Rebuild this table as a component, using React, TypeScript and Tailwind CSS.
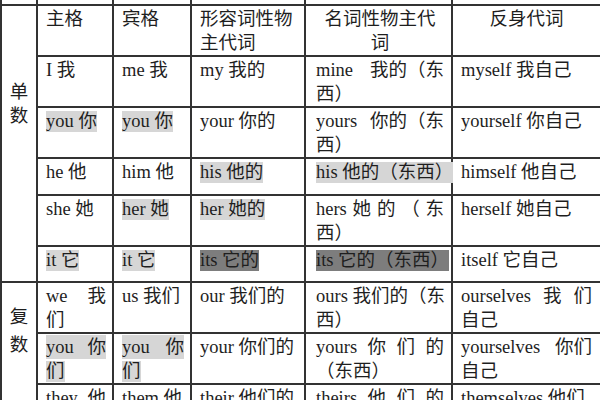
type Cell = { lines: string[]; hl?: "l" | "d"; center?: boolean };

const rows: { h: string; cells: Cell[] }[] = [
  {
    h: "h-[50px]",
    cells: [
      { lines: ["主格"] },
      { lines: ["宾格"] },
      { lines: ["形容词性物", "主代词"] },
      { lines: ["名词性物主代", "词"], center: true },
      { lines: ["反身代词"], center: true },
    ],
  },
  {
    h: "h-[49px]",
    cells: [
      { lines: ["I 我"] },
      { lines: ["me 我"] },
      { lines: ["my 我的"] },
      { lines: ["mine|我的（东", "西）"] },
      { lines: ["myself 我自己"] },
    ],
  },
  {
    h: "h-[49px]",
    cells: [
      { lines: ["you 你"], hl: "l" },
      { lines: ["you 你"], hl: "l" },
      { lines: ["your 你的"] },
      { lines: ["yours|你的（东", "西）"] },
      { lines: ["yourself 你自己"] },
    ],
  },
  {
    h: "h-[37px]",
    cells: [
      { lines: ["he 他"] },
      { lines: ["him 他"] },
      { lines: ["his 他的"], hl: "l" },
      { lines: ["his 他的（东西）"], hl: "l" },
      { lines: ["himself 他自己"] },
    ],
  },
  {
    h: "h-[49px]",
    cells: [
      { lines: ["she 她"] },
      { lines: ["her 她"], hl: "l" },
      { lines: ["her 她的"], hl: "l" },
      { lines: ["hers|她|的|（|东", "西）"] },
      { lines: ["herself 她自己"] },
    ],
  },
  {
    h: "h-[36px]",
    cells: [
      { lines: ["it 它"], hl: "l" },
      { lines: ["it 它"], hl: "l" },
      { lines: ["its 它的"], hl: "d" },
      { lines: ["its 它的（东西）"], hl: "d" },
      { lines: ["itself 它自己"] },
    ],
  },
  {
    h: "h-[49px]",
    cells: [
      { lines: ["we|我", "们"] },
      { lines: ["us 我们"] },
      { lines: ["our 我们的"] },
      { lines: ["ours 我们的（东", "西）"] },
      { lines: ["ourselves|我|们", "自己"] },
    ],
  },
  {
    h: "h-[49px]",
    cells: [
      { lines: ["you|你", "们"], hl: "l" },
      { lines: ["you|你", "们"], hl: "l" },
      { lines: ["your 你们的"] },
      { lines: ["yours|你|们|的", "（东西）"] },
      { lines: ["yourselves|你们", "自己"] },
    ],
  },
  {
    h: "h-[49px]",
    cells: [
      { lines: ["they|他", "们"] },
      { lines: ["them 他", "们"] },
      { lines: ["their 他们的"] },
      { lines: ["theirs|他|们|的", "（东西）"] },
      { lines: ["themselves 他们", "自己"] },
    ],
  },
];

const pads = ["pl-[8px] pr-[6px]", "pl-[8px] pr-[6px]", "pl-[8px] pr-[5px]", "pl-[10px] pr-[7px]", "pl-[8px] pr-[8px]"];

function Line({ text, hl, center }: { text: string; hl?: "l" | "d"; center?: boolean }) {
  const bg = hl === "l" ? "bg-[#d6d6d6]" : hl === "d" ? "bg-[#7d7d7d]" : "";
  if (text.includes("|")) {
    return (
      <div className={`flex justify-between whitespace-nowrap ${bg}`}>
        {text.split("|").map((p, i) => (
          <span key={i}>{p}</span>
        ))}
      </div>
    );
  }
  return (
    <div className={`whitespace-nowrap ${center ? "text-center" : ""}`}>
      <span className={`inline-block leading-[21px] ${bg}`}>{text}</span>
    </div>
  );
}

export default function App() {
  return (
    <div className="w-[600px] h-[400px] overflow-hidden bg-white font-['Liberation_Serif','Noto_Sans_CJK_SC',serif] text-[18.5px] leading-[24px] text-[#1e1e1e]">
      <table className="table-fixed border-collapse w-[600px]">
        <colgroup>
          <col className="w-[36px]" />
          <col className="w-[76px]" />
          <col className="w-[78px]" />
          <col className="w-[114px]" />
          <col className="w-[147px]" />
          <col className="w-[149px]" />
        </colgroup>
        <tbody>
          <tr className="h-[5px]">
            {[0, 1, 2, 3, 4, 5].map((i) => (
              <td key={i} className="p-0 border-x-2 border-[#333]" />
            ))}
          </tr>
          {rows.map((row, ri) => (
            <tr key={ri} className={row.h}>
              {ri === 0 && (
                <td rowSpan={6} className="border-2 border-[#333] align-top p-0 pt-[74px] text-center">
                  <div>单</div>
                  <div>数</div>
                </td>
              )}
              {ri === 6 && (
                <td rowSpan={3} className="border-2 border-[#333] align-top p-0 pt-[20px] text-center leading-[28px]">
                  <div>复</div>
                  <div>数</div>
                </td>
              )}
              {row.cells.map((c, ci) => (
                <td key={ci} className={`border-2 border-[#333] align-top pt-[1px] ${pads[ci]}`}>
                  {c.lines.map((l, li) => (
                    <Line key={li} text={l} hl={c.hl} center={c.center} />
                  ))}
                </td>
              ))}
            </tr>
          ))}
        </tbody>
      </table>
    </div>
  );
}
